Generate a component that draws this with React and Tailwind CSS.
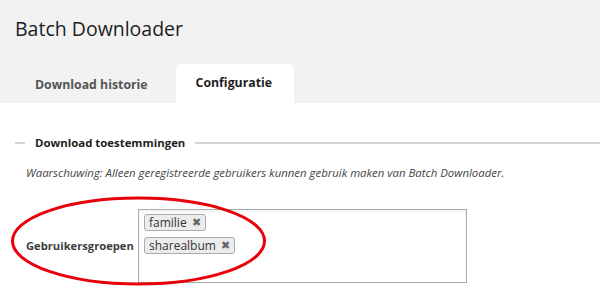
export default function App() {
  const font = { fontFamily: '"Open Sans", "Noto Sans", sans-serif' };
  const groups = ['familie', 'sharealbum'];

  return (
    <div className="relative w-[600px] h-[288px] overflow-hidden bg-white" style={font}>
      {/* header + tabs */}
      <div className="bg-[#f2f2f2] h-[103px] flex flex-col justify-between px-[15px] pt-[15px]">
        <h1 className="text-[19.5px] leading-[28px] text-[#1e1e1e]">Batch Downloader</h1>
        <div className="flex items-end gap-2">
          <div className="px-5 h-[39px] flex items-center pt-[4px] text-[12.3px] font-bold text-[#555]">Download historie</div>
          <div className="pl-5 pr-[22px] h-[39px] flex items-center bg-white rounded-t-[5px] text-[12.3px] font-bold text-[#1e1e1e]">
            Configuratie
          </div>
        </div>
      </div>

      {/* legend */}
      <div className="flex items-center mt-[31px] pl-[15px]">
        <div className="w-[10px] h-[2px] bg-[#d4d4d4]" />
        <div className="px-[10px] text-[11.4px] leading-[18px] font-bold text-[#1e1e1e]">Download toestemmingen</div>
        <div className="flex-1 h-[2px] bg-[#d4d4d4]" />
      </div>

      <p className="mt-[12px] pl-[26px] text-[11.4px] leading-[18px] italic text-[#444]">
        Waarschuwing: Alleen geregistreerde gebruikers kunnen gebruik maken van Batch Downloader.
      </p>

      {/* groups field */}
      <div className="flex items-center mt-[27px] pl-[26px]">
        <div className="w-[112px] text-[11.2px] font-bold text-[#3c3c3c]">Gebruikersgroepen</div>
        <div className="w-[329px] h-[74px] border border-[#aaa] bg-white shadow-[inset_0_2px_3px_rgba(0,0,0,0.06)] px-[5px] pt-[4px] flex flex-col items-start gap-[6px]">
          {groups.map((g) => (
            <span
              key={g}
              className="flex items-center h-[17px] pl-[4px] pr-[4px] border border-[#aaa] rounded-[3px] bg-[#ececec] text-[12px] text-[#333] leading-none"
            >
              {g}
              <span className="ml-[5px] text-[10.5px] text-[#666]">✖</span>
            </span>
          ))}
        </div>
      </div>

      {/* red annotation ellipse */}
      <svg className="absolute left-0 top-0 pointer-events-none" width="600" height="288">
        <ellipse cx="138.5" cy="241" rx="126" ry="43" fill="none" stroke="#e8000b" strokeWidth="3" />
      </svg>
    </div>
  );
}
